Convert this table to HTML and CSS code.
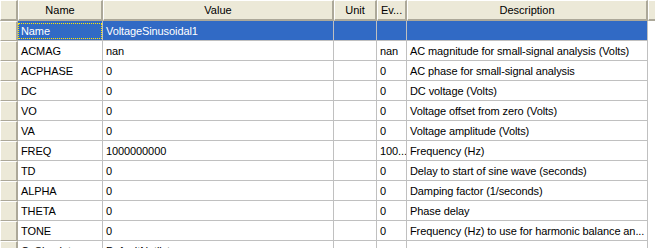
FILE: index.html
```html
<!DOCTYPE html>
<html lang="en">
<head>
    <meta charset="UTF-8">
    <title>Component Parameters</title>
    <link rel="stylesheet" href="styles.css">
</head>
<body>

<div class="grid-wrap">
    <table class="param-grid">
        <colgroup>
            <col class="c-row">
            <col class="c-name">
            <col class="c-value">
            <col class="c-unit">
            <col class="c-eval">
            <col class="c-desc">
            <col class="c-fill">
        </colgroup>
        <thead>
            <tr>
                <th class="corner"></th>
                <th>Name</th>
                <th>Value</th>
                <th>Unit</th>
                <th>Ev...</th>
                <th>Description</th>
                <th class="fill"></th>
            </tr>
        </thead>
        <tbody>
            <tr class="selected">
                <td class="rowhead"></td>
                <td><span class="focus">Name</span></td>
                <td>VoltageSinusoidal1</td>
                <td></td>
                <td></td>
                <td></td>
                <td class="fill"></td>
            </tr>
            <tr>
                <td class="rowhead"></td>
                <td>ACMAG</td>
                <td>nan</td>
                <td></td>
                <td>nan</td>
                <td>AC magnitude for small-signal analysis (Volts)</td>
                <td class="fill"></td>
            </tr>
            <tr>
                <td class="rowhead"></td>
                <td>ACPHASE</td>
                <td>0</td>
                <td></td>
                <td>0</td>
                <td>AC phase for small-signal analysis</td>
                <td class="fill"></td>
            </tr>
            <tr>
                <td class="rowhead"></td>
                <td>DC</td>
                <td>0</td>
                <td></td>
                <td>0</td>
                <td>DC voltage (Volts)</td>
                <td class="fill"></td>
            </tr>
            <tr>
                <td class="rowhead"></td>
                <td>VO</td>
                <td>0</td>
                <td></td>
                <td>0</td>
                <td>Voltage offset from zero (Volts)</td>
                <td class="fill"></td>
            </tr>
            <tr>
                <td class="rowhead"></td>
                <td>VA</td>
                <td>0</td>
                <td></td>
                <td>0</td>
                <td>Voltage amplitude (Volts)</td>
                <td class="fill"></td>
            </tr>
            <tr>
                <td class="rowhead"></td>
                <td>FREQ</td>
                <td>1000000000</td>
                <td></td>
                <td>100...</td>
                <td>Frequency (Hz)</td>
                <td class="fill"></td>
            </tr>
            <tr>
                <td class="rowhead"></td>
                <td>TD</td>
                <td>0</td>
                <td></td>
                <td>0</td>
                <td>Delay to start of sine wave (seconds)</td>
                <td class="fill"></td>
            </tr>
            <tr>
                <td class="rowhead"></td>
                <td>ALPHA</td>
                <td>0</td>
                <td></td>
                <td>0</td>
                <td>Damping factor (1/seconds)</td>
                <td class="fill"></td>
            </tr>
            <tr>
                <td class="rowhead"></td>
                <td>THETA</td>
                <td>0</td>
                <td></td>
                <td>0</td>
                <td>Phase delay</td>
                <td class="fill"></td>
            </tr>
            <tr>
                <td class="rowhead"></td>
                <td>TONE</td>
                <td>0</td>
                <td></td>
                <td>0</td>
                <td>Frequency (Hz) to use for harmonic balance an...</td>
                <td class="fill"></td>
            </tr>
            <tr>
                <td class="rowhead"></td>
                <td>CoSimulator</td>
                <td>DefaultNetlist</td>
                <td></td>
                <td></td>
                <td></td>
                <td class="fill"></td>
            </tr>
        </tbody>
    </table>
</div>

</body>
</html>
```

FILE: styles.css
```css
body {
    margin: 0;
    background: #fff;
    font-family: 'Liberation Sans', Arial, sans-serif;
    font-size: 11px;
    color: #000;
}

.grid-wrap {
    width: 655px;
    height: 248px;
    overflow: hidden;
}

.param-grid {
    border-collapse: separate;
    border-spacing: 0;
    table-layout: fixed;
    width: 655px;
}

.c-row { width: 18px; }
.c-name { width: 85px; }
.c-value { width: 231px; }
.c-unit { width: 43px; }
.c-eval { width: 30px; }
.c-desc { width: 241px; }
.c-fill { width: 7px; }

/* header buttons */
th {
    height: 21px;
    box-sizing: border-box;
    padding: 0 3px;
    background: #ece9d8;
    font-weight: normal;
    text-align: center;
    white-space: nowrap;
    overflow: hidden;
    border-top: 1px solid #fff;
    border-left: 1px solid #fff;
    border-right: 2px solid #aca899;
    border-bottom: 2px solid #aca899;
}

th.fill {
    border-right: none;
}

td {
    height: 20px;
    box-sizing: border-box;
    padding: 0 3px;
    letter-spacing: -0.1px;
    white-space: nowrap;
    overflow: hidden;
    border-right: 1px solid #c0c0c0;
    border-bottom: 1px solid #c0c0c0;
}

td.rowhead {
    padding: 0;
    background: #ece9d8;
    border-top: 1px solid #fff;
    border-left: 1px solid #fff;
    border-right: 2px solid #aca899;
    border-bottom: 1px solid #aca899;
}

td.fill {
    border: none;
    background: #fff;
}

.selected td {
    background: #316ac5;
    color: #fff;
}

.selected td.rowhead {
    background: #ece9d8;
}

.selected td.fill {
    background: #fff;
}

.focus {
    display: block;
    margin: 0 -3px;
    padding: 1px 2px;
    outline: 1px dotted #ffeb00;
    outline-offset: -1px;
    border: 1px dotted #000;
}
```
